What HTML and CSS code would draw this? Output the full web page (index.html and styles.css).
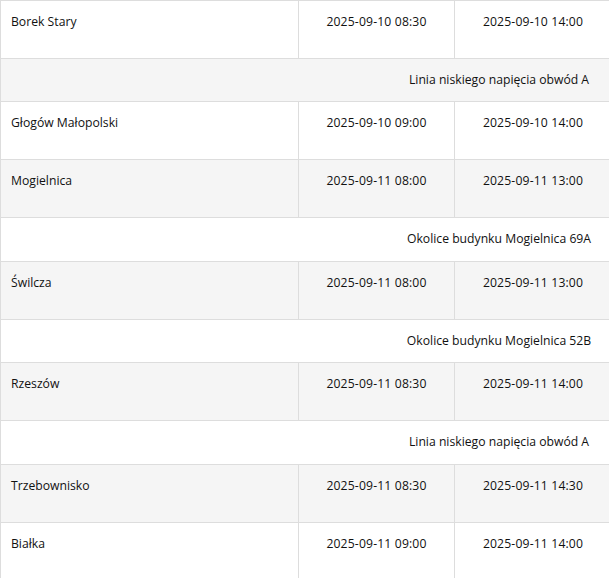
FILE: index.html
```html
<!DOCTYPE html>
<html lang="pl">
<head>
<meta charset="utf-8">
<title>Wyłączenia</title>
<link rel="stylesheet" href="styles.css">
</head>
<body>
<div class="wrap">
<table class="outages">
  <colgroup>
    <col class="c-place">
    <col class="c-from">
    <col class="c-to">
  </colgroup>
  <tbody>
    <tr class="main"><td class="place">Borek Stary</td><td class="time">2025-09-10 08:30</td><td class="time">2025-09-10 14:00</td></tr>
    <tr class="note"><td colspan="3">Linia niskiego napięcia obwód A</td></tr>
    <tr class="main"><td class="place">Głogów Małopolski</td><td class="time">2025-09-10 09:00</td><td class="time">2025-09-10 14:00</td></tr>
    <tr class="main"><td class="place">Mogielnica</td><td class="time">2025-09-11 08:00</td><td class="time">2025-09-11 13:00</td></tr>
    <tr class="note"><td colspan="3">Okolice budynku Mogielnica 69A</td></tr>
    <tr class="main"><td class="place">Świlcza</td><td class="time">2025-09-11 08:00</td><td class="time">2025-09-11 13:00</td></tr>
    <tr class="note"><td colspan="3">Okolice budynku Mogielnica 52B</td></tr>
    <tr class="main"><td class="place">Rzeszów</td><td class="time">2025-09-11 08:30</td><td class="time">2025-09-11 14:00</td></tr>
    <tr class="note"><td colspan="3">Linia niskiego napięcia obwód A</td></tr>
    <tr class="main"><td class="place">Trzebownisko</td><td class="time">2025-09-11 08:30</td><td class="time">2025-09-11 14:30</td></tr>
    <tr class="main"><td class="place">Białka</td><td class="time">2025-09-11 09:00</td><td class="time">2025-09-11 14:00</td></tr>
  </tbody>
</table>
</div>
</body>
</html>
```
FILE: styles.css
```css
html, body {
  margin: 0;
  padding: 0;
  background: #ffffff;
}
.wrap {
  width: 609px;
  overflow: hidden;
}
.outages {
  width: 611px;
  border-collapse: collapse;
  table-layout: fixed;
  font-family: "Open Sans", "Noto Sans", sans-serif;
  font-size: 12.2px;
  line-height: 18.4px;
  color: #111111;
}
.c-place { width: 298px; }
.c-from { width: 156px; }
.c-to { width: 157px; }
.outages td {
  border: 1px solid #dddddd;
  padding: 12px 10px;
  vertical-align: top;
}
.outages tr:nth-child(even) td {
  background: #f5f5f5;
}
.main td {
  height: 33px;
}
.time {
  text-align: center;
  letter-spacing: 0.15px;
}
.note td {
  text-align: center;
  padding-left: 396px;
  padding-right: 10px;
}
```
